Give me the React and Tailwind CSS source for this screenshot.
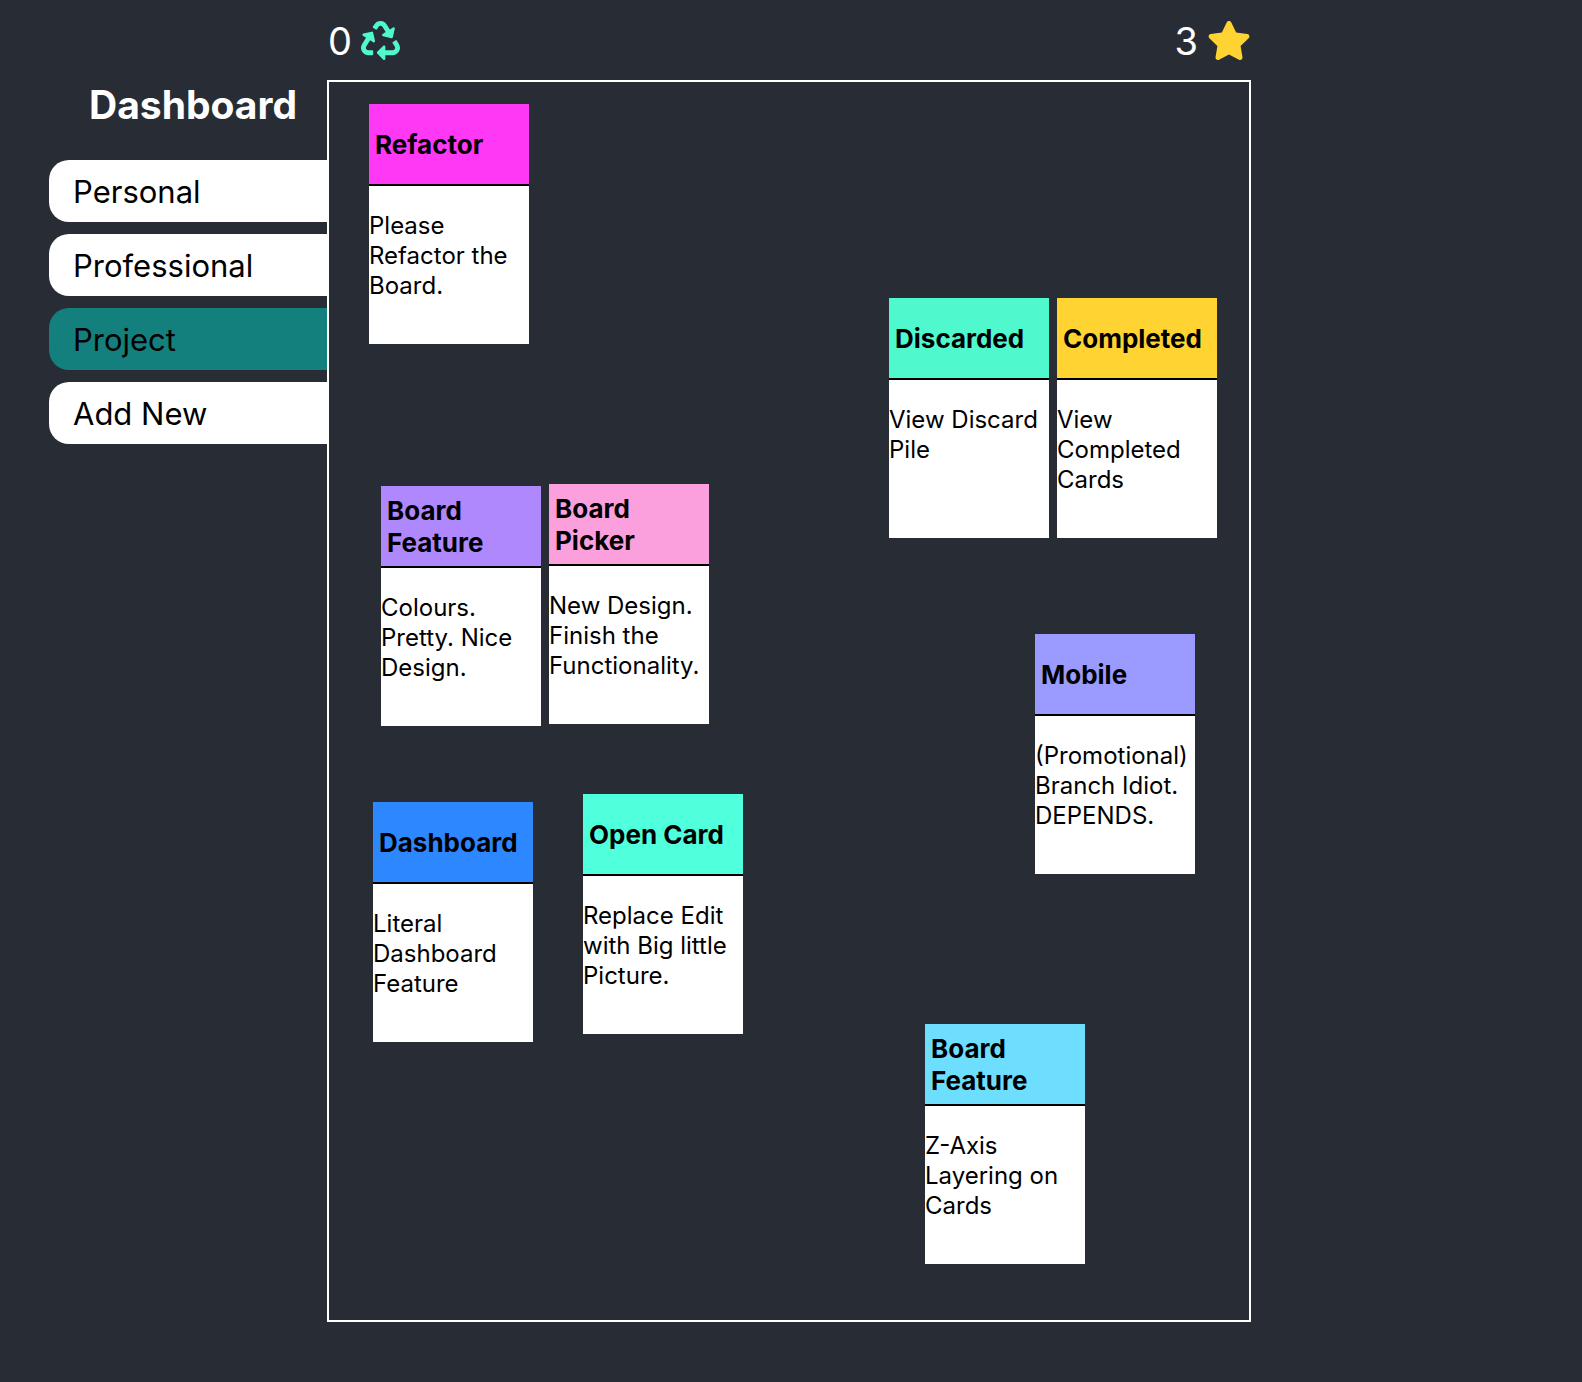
import React from "react";
import { FaRecycle, FaStar } from "react-icons/fa";

const boards = [
  { name: "Personal" },
  { name: "Professional" },
  { name: "Project", active: true },
  { name: "Add New" },
];

const cards = [
  { x: 40, y: 22, title: "Refactor", text: "Please Refactor the Board.", color: "bg-[#ff38f5]" },
  { x: 560, y: 216, title: "Discarded", text: "View Discard Pile", color: "bg-[#50f8cd]" },
  { x: 728, y: 216, title: "Completed", text: "View Completed Cards", color: "bg-[#ffd331]" },
  { x: 52, y: 404, title: "Board Feature", text: "Colours. Pretty. Nice Design.", color: "bg-[#b088fd]" },
  { x: 220, y: 402, title: "Board Picker", text: "New Design. Finish the Functionality.", color: "bg-[#fc9fdd]" },
  { x: 706, y: 552, title: "Mobile", text: "(Promotional) Branch Idiot. DEPENDS.", color: "bg-[#9a9aff]" },
  { x: 44, y: 720, title: "Dashboard", text: "Literal Dashboard Feature", color: "bg-[#2d87ff]" },
  { x: 254, y: 712, title: "Open Card", text: "Replace Edit with Big little Picture.", color: "bg-[#50ffdc]" },
  { x: 596, y: 942, title: "Board Feature", text: "Z-Axis Layering on Cards", color: "bg-[#6edeff]" },
];

function BoardTab({ name, active }) {
  return (
    <button
      type="button"
      aria-current={active ? "page" : undefined}
      className={`h-[62px] w-full rounded-l-[20px] pt-0.5 pl-6 text-left text-[31px] text-black ${
        active ? "bg-[#14807e]" : "bg-white"
      }`}
    >
      {name}
    </button>
  );
}

function Card({ x, y, title, text, color }) {
  return (
    <article className="absolute flex h-60 w-40 flex-col bg-white text-black" style={{ left: x, top: y }}>
      <div className={`flex h-[82px] items-center border-b-2 border-black pt-0.5 pl-1.5 ${color}`}>
        <h2 className="text-[26px] leading-8 font-bold">{title}</h2>
      </div>
      <p className="pt-[25px] text-[24px] leading-[30px]">{text}</p>
    </article>
  );
}

export default function App() {
  return (
    <div className="grid min-h-screen grid-cols-[327px_1fr_331px] bg-[#282c34] pb-[60px] font-['Inter',sans-serif] text-white">
      <aside className="pt-20 pl-[49px]">
        <h1 className="mb-[30px] pl-10 text-[39px] leading-[50px] font-bold">Dashboard</h1>
        <nav className="flex flex-col gap-3">
          {boards.map((b) => (
            <BoardTab key={b.name} {...b} />
          ))}
        </nav>
      </aside>
      <main className="flex flex-col">
        <header className="flex h-20 items-center justify-between pl-px text-[38px]">
          <div className="flex items-center gap-[9px]">
            <span className="pt-0.5">0</span>
            <FaRecycle className="h-[39px] w-[39px] text-[#50f8cd]" />
          </div>
          <div className="flex items-center gap-[9px]">
            <span className="pt-0.5">3</span>
            <FaStar className="h-[39px] w-11 text-[#ffd331]" />
          </div>
        </header>
        <section aria-label="Project board" className="relative min-h-[1242px] border-2 border-white">
          {cards.map((c) => (
            <Card key={c.title + c.x} {...c} />
          ))}
        </section>
      </main>
    </div>
  );
}
